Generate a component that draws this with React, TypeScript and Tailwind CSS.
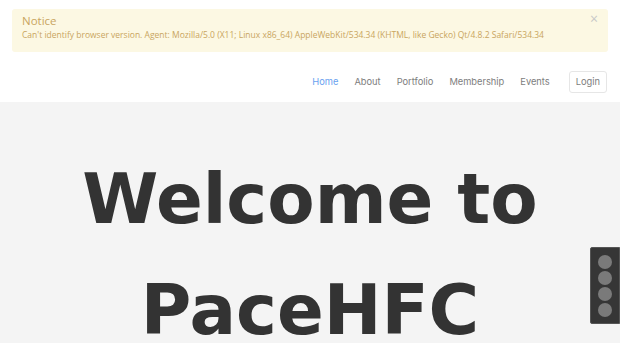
import React from "react";

const navItems = [
  { name: "Home", active: true },
  { name: "About" },
  { name: "Portfolio" },
  { name: "Membership" },
  { name: "Events" },
];

const Notice = () => {
  return (
    <div className="relative mx-[12px] mt-[9px] h-[43px] rounded-[3px] bg-[#fcf8e3] pl-[10px] pt-[4px] text-[#c9a560] [font-family:'Open_Sans',sans-serif]">
      <div className="text-[11.5px] leading-[15px]">Notice</div>
      <div className="text-[8.5px] leading-[13px]">
        Can't identify browser version. Agent: Mozilla/5.0 (X11; Linux x86_64) AppleWebKit/534.34 (KHTML, like Gecko) Qt/4.8.2 Safari/534.34
      </div>
      <span className="absolute right-[10px] top-[3px] text-[14px] leading-[14px] text-[#c8c8c8]">×</span>
    </div>
  );
};

const Header = () => {
  return (
    <nav className="flex h-[50px] items-center justify-end pr-[13px] pt-[9px] [font-family:Inter,sans-serif]">
      <ul className="flex items-center text-[9.3px]">
        {navItems.map((item) => (
          <li
            key={item.name}
            className={
              item.active
                ? "mr-[16px] text-[#6aa1ef]"
                : "mr-[16px] text-[#7d7d7d]"
            }
          >
            {item.name}
          </li>
        ))}
        <li className="ml-[3px] flex h-[22px] items-center rounded-[3px] border border-[#e6e6e6] px-[6px] text-[#7d7d7d]">
          Login
        </li>
      </ul>
    </nav>
  );
};

const SideDots = () => {
  return (
    <div className="absolute right-0 top-[247px] flex h-[77px] w-[30px] flex-col items-center justify-center gap-[2px] rounded-l-[2px] border border-[#555] bg-[#363636]">
      {[0, 1, 2, 3].map((i) => (
        <span key={i} className="h-[14px] w-[14px] rounded-full bg-[#7a7a7a]" />
      ))}
    </div>
  );
};

export default function App() {
  return (
    <div className="relative h-[343px] w-[620px] overflow-hidden bg-white">
      <Notice />
      <Header />
      <section className="h-[241px] bg-[#f4f4f4] pt-[42px] text-center">
        <h1 className="text-[69px] font-bold leading-[111px] text-[#333] [font-family:'DejaVu_Sans',sans-serif]">
          Welcome to
          <br />
          PaceHFC
        </h1>
      </section>
      <SideDots />
    </div>
  );
}
